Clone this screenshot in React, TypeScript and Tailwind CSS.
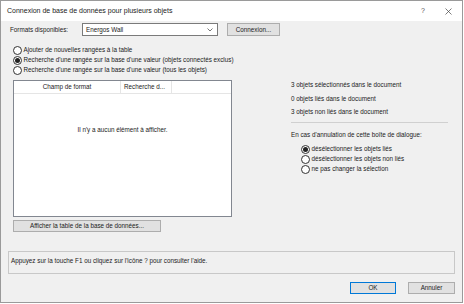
import React from "react";

function Radio({ checked, label }: { checked?: boolean; label: string }) {
  return (
    <label className="flex items-center h-[10px] gap-[1.5px]">
      <span className="w-[9px] h-[9px] rounded-full border border-[#333] bg-white flex items-center justify-center shrink-0">
        {checked && <span className="w-[5px] h-[5px] rounded-full bg-[#222]" />}
      </span>
      <span>{label}</span>
    </label>
  );
}

export default function App() {
  return (
    <div className="w-[464px] h-[304px] bg-white" style={{ fontFamily: '"Liberation Sans", Arial, sans-serif' }}>
      <div className="w-[463px] h-[303px] border border-[#9a9a9a] bg-[#f0f0f0] flex flex-col text-[6.3px] text-[#1a1a1a]">
        {/* title bar */}
        <div className="h-[20px] bg-white flex items-center pl-[6px] text-[7px] shrink-0">
          <span className="flex-1">Connexion de base de données pour plusieurs objets</span>
          <span className="w-[10px] text-center text-[#555]">?</span>
          <svg className="ml-[17px] mr-[10px]" width="7" height="7" viewBox="0 0 7 7">
            <path d="M0.5 0.5 L6.5 6.5 M6.5 0.5 L0.5 6.5" stroke="#444" strokeWidth="0.7" />
          </svg>
        </div>

        {/* formats row */}
        <div className="flex items-center h-[13px] mt-[2px] pl-[9px]">
          <span className="w-[72px]">Formats disponibles:</span>
          <div className="w-[136px] h-[13px] bg-white border border-[#7a7a7a] flex items-center pl-[3px] pr-[4px]">
            <span className="flex-1">Energos Wall</span>
            <svg width="6" height="4" viewBox="0 0 6 4">
              <path d="M0.5 0.5 L3 3 L5.5 0.5" fill="none" stroke="#555" strokeWidth="0.8" />
            </svg>
          </div>
          <button className="ml-[9px] w-[53px] h-[13px] bg-[#e1e1e1] border border-[#adadad] flex items-center justify-center">
            Connexion...
          </button>
        </div>

        {/* mode radios */}
        <div className="flex flex-col mt-[9px] pl-[12px]">
          <Radio label="Ajouter de nouvelles rangées à la table" />
          <Radio checked label="Recherche d'une rangée sur la base d'une valeur (objets connectés exclus)" />
          <Radio label="Recherche d'une rangée sur la base d'une valeur (tous les objets)" />
        </div>

        {/* main area */}
        <div className="flex mt-[5px] pl-[12px]">
          <div className="flex flex-col">
            <div className="w-[219px] h-[137px] bg-white border border-[#828790] flex flex-col">
              <div className="flex h-[13px] border-b border-[#e5e5e5] shrink-0">
                <div className="w-[107px] border-r border-[#e5e5e5] flex items-center justify-center">Champ de format</div>
                <div className="w-[51px] border-r border-[#e5e5e5] flex items-center pl-[3px]">Recherche d...</div>
              </div>
              <div className="flex-1 flex items-start justify-center pt-[31px]">
                Il n'y a aucun élément à afficher.
              </div>
            </div>
            <button className="mt-[3px] w-[148px] h-[12px] bg-[#e1e1e1] border border-[#adadad] flex items-center justify-center">
              Afficher la table de la base de données...
            </button>
          </div>

          <div className="ml-[59px] w-[157px] flex flex-col -mt-[2px]">
            <div className="h-[13.5px] flex items-center">3 objets sélectionnés dans le document</div>
            <div className="h-[13.5px] flex items-center">0 objets liés dans le document</div>
            <div className="h-[13.5px] flex items-center">3 objets non liés dans le document</div>
            <div className="mt-[3.5px] border-t border-[#d0d0d0]" />
            <div className="h-[13px] mt-[5px] flex items-center">En cas d'annulation de cette boîte de dialogue:</div>
            <div className="flex flex-col mt-[3px] pl-[10px]">
              <Radio checked label="désélectionner les objets liés" />
              <Radio label="désélectionner les objets non liés" />
              <Radio label="ne pas changer la sélection" />
            </div>
          </div>
        </div>

        {/* status */}
        <div className="mt-[19px] ml-[7px] w-[447px] h-[23px] border border-[#c8c8c8] pl-[2px] pt-[4px]">
          Appuyez sur la touche F1 ou cliquez sur l'icône ? pour consulter l'aide.
        </div>

        {/* buttons */}
        <div className="flex justify-end gap-[12px] mt-[8px] pr-[7px]">
          <button className="w-[46px] h-[12px] bg-[#e1e1e1] border border-[#0078d7] flex items-center justify-center">OK</button>
          <button className="w-[47px] h-[12px] bg-[#e1e1e1] border border-[#adadad] flex items-center justify-center">Annuler</button>
        </div>
      </div>
    </div>
  );
}
